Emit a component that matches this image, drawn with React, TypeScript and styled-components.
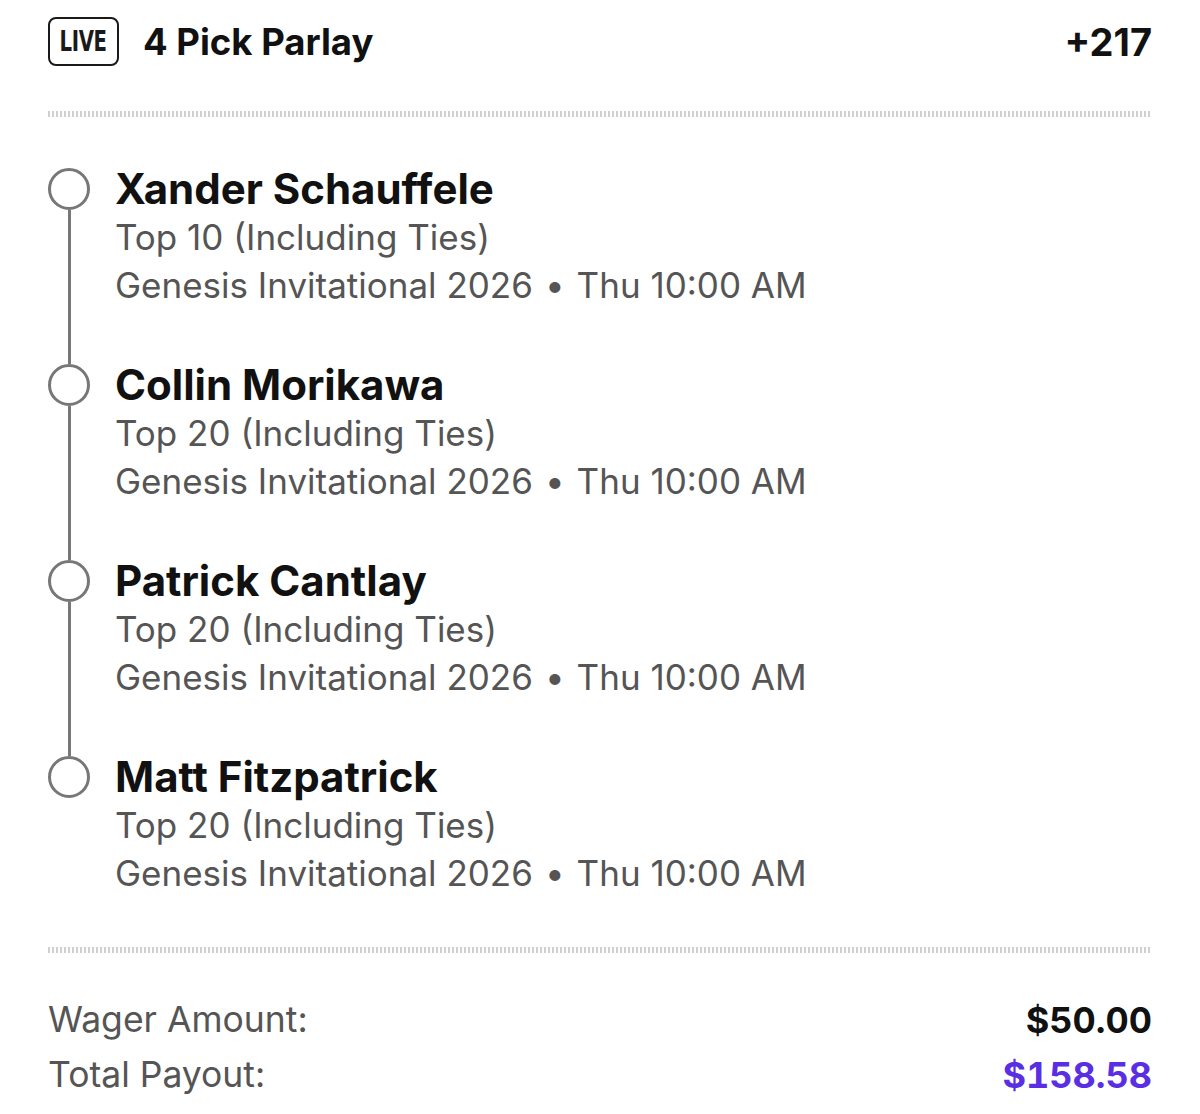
import styled, { createGlobalStyle } from "styled-components";

const GlobalStyle = createGlobalStyle`
  body {
    margin: 0;
    background: #ffffff;
    font-family: Inter, "Noto Sans", sans-serif;
  }
`;

const Slip = styled.div`
  padding: 17px 48px 0 48px;
  color: #111111;
`;

const Header = styled.div`
  display: flex;
  align-items: center;
  height: 49px;
`;

const LiveBadge = styled.div`
  box-sizing: border-box;
  width: 71px;
  height: 49px;
  border: 2.5px solid #1a1a1a;
  border-radius: 8px;
  display: flex;
  align-items: center;
  justify-content: center;
  color: #1a1a1a;
`;

const LiveText = styled.span`
  display: inline-block;
  font-family: "DejaVu Sans Condensed", "Liberation Sans Narrow", sans-serif;
  font-weight: 700;
  font-size: 28px;
  letter-spacing: -0.5px;
  transform: scaleX(0.78);
`;

const Title = styled.div`
  margin-left: 24px;
  font-size: 36.5px;
  font-weight: 700;
  flex: 1;
`;

const Odds = styled.div`
  font-size: 38px;
  font-weight: 700;
`;

const Divider = styled.div<{ $top: number; $bottom: number }>`
  height: 6px;
  margin: ${(p) => p.$top}px 0 ${(p) => p.$bottom}px 0;
  background: repeating-linear-gradient(
    to right,
    #cfcfcf 0 2px,
    transparent 2px 4px
  );
`;

const Legs = styled.div`
  display: flex;
  flex-direction: column;
`;

const Leg = styled.div`
  display: grid;
  grid-template-columns: 42px 1fr;
  column-gap: 25px;
`;

const Marker = styled.div`
  display: flex;
  flex-direction: column;
  align-items: center;
  padding-top: 3px;
`;

const Circle = styled.div`
  box-sizing: border-box;
  width: 42px;
  height: 42px;
  border: 3px solid #777777;
  border-radius: 50%;
  flex: none;
`;

const Connector = styled.div<{ $hidden: boolean }>`
  width: 3px;
  flex: 1;
  background: ${(p) => (p.$hidden ? "transparent" : "#777777")};
  margin-bottom: -3px;
`;

const Content = styled.div<{ $last: boolean }>`
  padding-bottom: ${(p) => (p.$last ? 0 : 52)}px;
`;

const Player = styled.div`
  font-size: 42px;
  font-weight: 700;
  line-height: 48px;
  color: #111111;
`;

const Detail = styled.div`
  font-size: 35px;
  line-height: 48px;
  color: #555555;
`;

const Dot = styled.span`
  margin: 0 12px;
`;

const Summary = styled.div`
  display: flex;
  flex-direction: column;
`;

const SummaryRow = styled.div`
  display: flex;
  justify-content: space-between;
  align-items: center;
  height: 55px;
`;

const Label = styled.span`
  font-size: 35.5px;
  color: #555555;
`;

const Amount = styled.span<{ $accent?: boolean }>`
  font-size: 36px;
  font-weight: 700;
  font-variant-numeric: tabular-nums;
  color: ${(p) => (p.$accent ? "#5a2ee3" : "#111111")};
`;

const picks = [
  { player: "Xander Schauffele", market: "Top 10 (Including Ties)" },
  { player: "Collin Morikawa", market: "Top 20 (Including Ties)" },
  { player: "Patrick Cantlay", market: "Top 20 (Including Ties)" },
  { player: "Matt Fitzpatrick", market: "Top 20 (Including Ties)" },
];

export default function App() {
  return (
    <>
      <GlobalStyle />
      <Slip>
        <Header>
          <LiveBadge>
            <LiveText>LIVE</LiveText>
          </LiveBadge>
          <Title>4 Pick Parlay</Title>
          <Odds>+217</Odds>
        </Header>
        <Divider $top={45} $bottom={48} />
        <Legs>
          {picks.map((pick, i) => {
            const last = i === picks.length - 1;
            return (
              <Leg key={pick.player}>
                <Marker>
                  <Circle />
                  <Connector $hidden={last} />
                </Marker>
                <Content $last={last}>
                  <Player>{pick.player}</Player>
                  <Detail>{pick.market}</Detail>
                  <Detail>
                    Genesis Invitational 2026<Dot>•</Dot>Thu 10:00 AM
                  </Detail>
                </Content>
              </Leg>
            );
          })}
        </Legs>
        <Divider $top={50} $bottom={39} />
        <Summary>
          <SummaryRow>
            <Label>Wager Amount:</Label>
            <Amount>$50.00</Amount>
          </SummaryRow>
          <SummaryRow>
            <Label>Total Payout:</Label>
            <Amount $accent>$158.58</Amount>
          </SummaryRow>
        </Summary>
      </Slip>
    </>
  );
}
